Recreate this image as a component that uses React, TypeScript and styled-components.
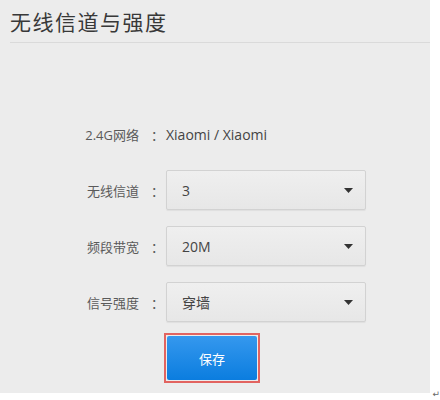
import { Fragment } from 'react';
import styled, { createGlobalStyle } from 'styled-components';

const GlobalStyle = createGlobalStyle`
	html, body {
		margin: 0;
		padding: 0;
		background: #ffffff;
	}
	body {
		font-family: 'Open Sans', 'Noto Sans CJK SC', sans-serif;
	}
`;

const fields = [
	{ label: '无线信道', value: '3' },
	{ label: '频段带宽', value: '20M' },
	{ label: '信号强度', value: '穿墙' },
];

function Arrow() {
	return (
		<svg width='9' height='5' viewBox='0 0 9 5'>
			<path d='M0 0 L9 0 L4.5 5 Z' fill='#333' />
		</svg>
	);
}

export default function App() {
	return (
		<>
			<GlobalStyle />
			<Page>
				<Panel>
					<Header>
						<Title>无线信道与强度</Title>
					</Header>
					<Form>
						<Label>
							2.4G网络<Colon>：</Colon>
						</Label>
						<Info>Xiaomi / Xiaomi</Info>
						{fields.map((f) => (
							<Fragment key={f.label}>
								<Label>
									{f.label}
									<Colon>：</Colon>
								</Label>
								<Select>
									<span>{f.value}</span>
									<Arrow />
								</Select>
							</Fragment>
						))}
					</Form>
					<Highlight>
						<SaveButton>保存</SaveButton>
					</Highlight>
				</Panel>
				<Mark>↵</Mark>
			</Page>
		</>
	);
}

const Page = styled.div`
	display: flex;
	width: 440px;
	height: 400px;
	overflow: hidden;
`;

const Panel = styled.div`
	width: 430px;
	height: 393px;
	background: #ececec;
	display: flex;
	flex-direction: column;
	align-items: flex-start;
`;

const Header = styled.div`
	align-self: stretch;
	margin-left: 10px;
	height: 42px;
	display: flex;
	align-items: center;
	border-bottom: 1px solid #dadada;
`;

const Title = styled.h1`
	margin: 0;
	font-family: 'Noto Sans CJK SC', sans-serif;
	font-size: 21px;
	font-weight: 400;
	color: #383838;
	letter-spacing: 1.5px;
`;

const Form = styled.div`
	margin-top: 71px;
	display: grid;
	grid-template-columns: 164px 200px;
	grid-auto-rows: 40px;
	column-gap: 2px;
	row-gap: 16px;
	align-items: center;
`;

const Label = styled.div`
	justify-self: end;
	display: flex;
	align-items: center;
	font-family: 'Open Sans', 'Noto Sans CJK SC', sans-serif;
	font-size: 13px;
	color: #5a5a5a;
`;

const Colon = styled.span`
	margin-left: 12px;
	font-family: 'Noto Sans CJK SC', sans-serif;
`;

const Info = styled.div`
	font-size: 14px;
	color: #444;
`;

const Select = styled.div`
	height: 40px;
	box-sizing: border-box;
	display: flex;
	align-items: center;
	justify-content: space-between;
	padding: 0 12px 0 15px;
	border: 1px solid #d2d2d2;
	border-radius: 2px;
	background: linear-gradient(#efefef, #e7e7e7);
	box-shadow: 0 1px 1px rgba(0, 0, 0, 0.06);
	font-family: 'Open Sans', 'Noto Sans CJK SC', sans-serif;
	font-size: 14px;
	color: #444;
`;

const Highlight = styled.div`
	margin: 11px 0 0 164px;
	padding: 1px;
	border: 2px solid #e26460;
	display: flex;
`;

const SaveButton = styled.button`
	width: 90px;
	height: 44px;
	border: none;
	border-radius: 2px;
	background: linear-gradient(#3598ee, #0b7ddf);
	color: #fff;
	font-family: 'Noto Sans CJK SC', sans-serif;
	font-size: 13px;
`;

const Mark = styled.div`
	align-self: flex-end;
	width: 10px;
	margin-bottom: 1px;
	font-family: 'DejaVu Sans', sans-serif;
	font-size: 9px;
	color: #666;
	text-align: right;
`;
